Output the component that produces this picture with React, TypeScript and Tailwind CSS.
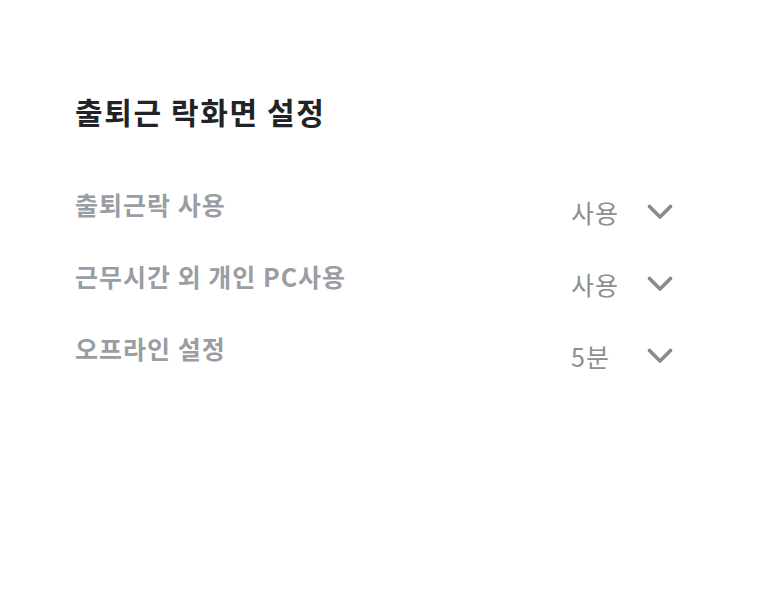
const rows = [
  { label: '출퇴근락 사용', value: '사용' },
  { label: '근무시간 외 개인 PC사용', value: '사용' },
  { label: '오프라인 설정', value: '5분' },
]

function Chevron() {
  return (
    <svg width="26" height="18" viewBox="0 0 26 18" fill="none" className="shrink-0">
      <polyline
        points="2.5,3.5 13,14 23.5,3.5"
        stroke="#8a8a8a"
        strokeWidth="3.6"
        strokeLinecap="round"
        strokeLinejoin="round"
      />
    </svg>
  )
}

export default function App() {
  return (
    <div
      className="min-h-screen bg-white pl-[75px] pr-[87px] pt-[89px]"
      style={{ fontFamily: '"Noto Sans CJK KR", "Noto Sans", sans-serif' }}
    >
      <h1 className="text-[30px] font-bold leading-[44px] tracking-[1.6px] text-[#222326]">
        출퇴근 락화면 설정
      </h1>
      <div className="mt-[55px] flex flex-col">
        {rows.map((row) => (
          <div key={row.label} className="flex h-[72px] items-start justify-between">
            <span className="text-[25px] font-semibold leading-[32px] tracking-[1px] text-[#9a9da3]">
              {row.label}
            </span>
            <div className="mt-[8px] flex items-center">
              <span className="w-[76px] text-[25px] leading-[32px] tracking-[1px] text-[#8e8e8e]">
                {row.value}
              </span>
              <Chevron />
            </div>
          </div>
        ))}
      </div>
    </div>
  )
}
